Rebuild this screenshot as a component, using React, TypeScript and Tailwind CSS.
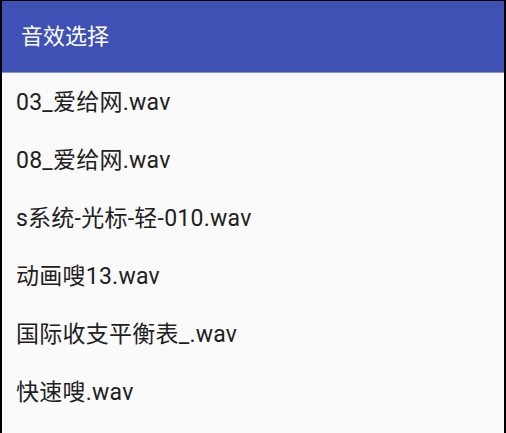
const sounds = [
  "03_爱给网.wav",
  "08_爱给网.wav",
  "s系统-光标-轻-010.wav",
  "动画嗖13.wav",
  "国际收支平衡表_.wav",
  "快速嗖.wav",
];

export default function App() {
  return (
    <div
      className="w-[506px] h-[433px] overflow-hidden bg-black pl-[2px] pr-[2px] pt-px"
      style={{ fontFamily: 'Roboto, "Noto Sans CJK SC", sans-serif' }}
    >
      <div className="flex h-full flex-col bg-[#fafafa]">
        <header className="flex h-[72px] shrink-0 items-center bg-[#3f51b5] pl-[19px] border-b border-[#8893cf]">
          <h1 className="text-[22px] font-normal text-white">音效选择</h1>
        </header>
        <ul className="flex flex-col pt-px">
          {sounds.map((name) => (
            <li
              key={name}
              className="flex h-[58px] items-center pl-[14px] text-[23px] tracking-[0.25px] text-[#212121]"
            >
              {name}
            </li>
          ))}
        </ul>
      </div>
    </div>
  );
}
